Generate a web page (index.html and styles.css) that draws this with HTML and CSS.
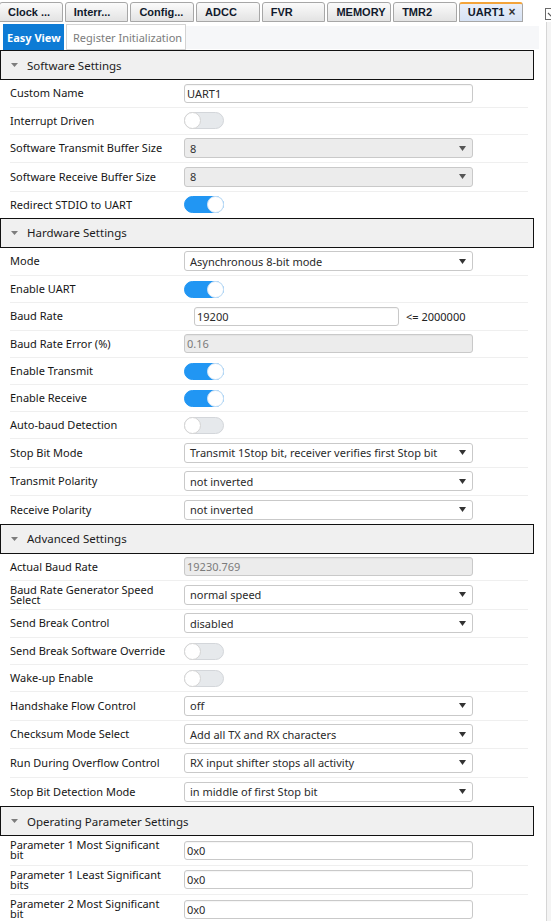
FILE: index.html
```html
<!DOCTYPE html>
<html>
<head>
<meta charset="utf-8">
<link rel="stylesheet" href="styles.css">
</head>
<body>
<div class="tabbar">
  <div class="tab">Clock ...</div>
  <div class="tab">Interr...</div>
  <div class="tab">Config...</div>
  <div class="tab">ADCC</div>
  <div class="tab">FVR</div>
  <div class="tab">MEMORY</div>
  <div class="tab">TMR2</div>
  <div class="tab active">UART1<span class="x">×</span></div>
  <div class="tabmenu"><svg width="12" height="12" viewBox="0 0 12 12"><rect x="0.5" y="0.5" width="11" height="11" fill="#fff" stroke="#6a6a6a"/><path d="M3 5 L6 8 L9 5" fill="none" stroke="#555" stroke-width="1.2"/></svg></div>
</div>
<div class="main">
  <div class="content">
    <div class="subtabs">
      <div class="st st-on">Easy View</div>
      <div class="st st-off">Register Initialization</div>
      <div class="st-fill"></div>
    </div>

    <div class="sh"><svg class="tri" width="7" height="4" viewBox="0 0 7 4"><path d="M0 0 H7 L3.5 4 Z" fill="#7d7d7d"/></svg>Software Settings</div>
    <div class="row r-in"><div class="lbl">Custom Name</div><div class="field">UART1</div></div>
    <div class="row r-tg"><div class="lbl">Interrupt Driven</div><div class="tg"><span class="knob"></span></div></div>
    <div class="row r-sel"><div class="lbl">Software Transmit Buffer Size</div><div class="sel dis"><span>8</span><svg class="arr" width="7" height="5" viewBox="0 0 7 5"><path d="M0 0 H7 L3.5 5 Z" fill="#555"/></svg></div></div>
    <div class="row r-sel"><div class="lbl">Software Receive Buffer Size</div><div class="sel dis"><span>8</span><svg class="arr" width="7" height="5" viewBox="0 0 7 5"><path d="M0 0 H7 L3.5 5 Z" fill="#555"/></svg></div></div>
    <div class="row r-tg last short"><div class="lbl">Redirect STDIO to UART</div><div class="tg on"><span class="knob"></span></div></div>

    <div class="sh"><svg class="tri" width="7" height="4" viewBox="0 0 7 4"><path d="M0 0 H7 L3.5 4 Z" fill="#7d7d7d"/></svg>Hardware Settings</div>
    <div class="row r-sel"><div class="lbl">Mode</div><div class="sel"><span>Asynchronous 8-bit mode</span><svg class="arr" width="7" height="5" viewBox="0 0 7 5"><path d="M0 0 H7 L3.5 5 Z" fill="#333"/></svg></div></div>
    <div class="row r-tg"><div class="lbl">Enable UART</div><div class="tg on"><span class="knob"></span></div></div>
    <div class="row r-in"><div class="lbl">Baud Rate</div><div class="field baud">19200</div><span class="limit">&lt;= 2000000</span></div>
    <div class="row r-in"><div class="lbl">Baud Rate Error (%)</div><div class="field dis">0.16</div></div>
    <div class="row r-tg"><div class="lbl">Enable Transmit</div><div class="tg on"><span class="knob"></span></div></div>
    <div class="row r-tg"><div class="lbl">Enable Receive</div><div class="tg on"><span class="knob"></span></div></div>
    <div class="row r-tg"><div class="lbl">Auto-baud Detection</div><div class="tg"><span class="knob"></span></div></div>
    <div class="row r-sel"><div class="lbl">Stop Bit Mode</div><div class="sel"><span>Transmit 1Stop bit, receiver verifies first Stop bit</span><svg class="arr" width="7" height="5" viewBox="0 0 7 5"><path d="M0 0 H7 L3.5 5 Z" fill="#333"/></svg></div></div>
    <div class="row r-sel"><div class="lbl">Transmit Polarity</div><div class="sel"><span>not inverted</span><svg class="arr" width="7" height="5" viewBox="0 0 7 5"><path d="M0 0 H7 L3.5 5 Z" fill="#333"/></svg></div></div>
    <div class="row r-sel last short"><div class="lbl">Receive Polarity</div><div class="sel"><span>not inverted</span><svg class="arr" width="7" height="5" viewBox="0 0 7 5"><path d="M0 0 H7 L3.5 5 Z" fill="#333"/></svg></div></div>

    <div class="sh"><svg class="tri" width="7" height="4" viewBox="0 0 7 4"><path d="M0 0 H7 L3.5 4 Z" fill="#7d7d7d"/></svg>Advanced Settings</div>
    <div class="row r-in"><div class="lbl">Actual Baud Rate</div><div class="field dis">19230.769</div></div>
    <div class="row r-sel"><div class="lbl">Baud Rate Generator Speed Select</div><div class="sel"><span>normal speed</span><svg class="arr" width="7" height="5" viewBox="0 0 7 5"><path d="M0 0 H7 L3.5 5 Z" fill="#333"/></svg></div></div>
    <div class="row r-sel"><div class="lbl">Send Break Control</div><div class="sel"><span>disabled</span><svg class="arr" width="7" height="5" viewBox="0 0 7 5"><path d="M0 0 H7 L3.5 5 Z" fill="#333"/></svg></div></div>
    <div class="row r-tg"><div class="lbl">Send Break Software Override</div><div class="tg"><span class="knob"></span></div></div>
    <div class="row r-tg"><div class="lbl">Wake-up Enable</div><div class="tg"><span class="knob"></span></div></div>
    <div class="row r-sel"><div class="lbl">Handshake Flow Control</div><div class="sel"><span>off</span><svg class="arr" width="7" height="5" viewBox="0 0 7 5"><path d="M0 0 H7 L3.5 5 Z" fill="#333"/></svg></div></div>
    <div class="row r-sel"><div class="lbl">Checksum Mode Select</div><div class="sel"><span>Add all TX and RX characters</span><svg class="arr" width="7" height="5" viewBox="0 0 7 5"><path d="M0 0 H7 L3.5 5 Z" fill="#333"/></svg></div></div>
    <div class="row r-sel"><div class="lbl">Run During Overflow Control</div><div class="sel"><span>RX input shifter stops all activity</span><svg class="arr" width="7" height="5" viewBox="0 0 7 5"><path d="M0 0 H7 L3.5 5 Z" fill="#333"/></svg></div></div>
    <div class="row r-sel last"><div class="lbl">Stop Bit Detection Mode</div><div class="sel"><span>in middle of first Stop bit</span><svg class="arr" width="7" height="5" viewBox="0 0 7 5"><path d="M0 0 H7 L3.5 5 Z" fill="#333"/></svg></div></div>

    <div class="sh"><svg class="tri" width="7" height="4" viewBox="0 0 7 4"><path d="M0 0 H7 L3.5 4 Z" fill="#7d7d7d"/></svg>Operating Parameter Settings</div>
    <div class="row r-p"><div class="lbl">Parameter 1 Most Significant bit</div><div class="field">0x0</div></div>
    <div class="row r-p"><div class="lbl">Parameter 1 Least Significant bits</div><div class="field">0x0</div></div>
    <div class="row r-p"><div class="lbl">Parameter 2 Most Significant bit</div><div class="field">0x0</div></div>
  </div>
  <div class="vscroll"></div>
</div>
</body>
</html>
```

FILE: styles.css
```css
* { box-sizing: border-box; }
html, body { margin: 0; padding: 0; background: #fff; }
body {
  width: 551px;
  height: 921px;
  overflow: hidden;
  font-family: "Noto Sans", "Open Sans", sans-serif;
  font-size: 11px;
  color: #161616;
}

/* top tab bar */
.tabbar {
  display: flex;
  gap: 2px;
  height: 22px;
  margin-left: -1px;
  overflow: hidden;
  white-space: nowrap;
}
.tab {
  flex: none;
  width: 63.7px;
  height: 20px;
  margin-top: 2px;
  padding-left: 8px;
  border: 1px solid #a7a7a7;
  border-radius: 3px 3px 0 0;
  background: linear-gradient(#fbfbfb, #e3e3e3);
  font-family: "Liberation Sans", Arial, sans-serif;
  font-weight: bold;
  font-size: 11px;
  line-height: 18px;
  color: #111a2c;
}
.tab.active {
  border-top: 2px solid #f3a43b;
  background: linear-gradient(#e9effa, #d6e2f4);
  line-height: 17px;
  display: flex;
  justify-content: space-between;
  padding-right: 6px;
}
.tab .x { font-size: 12px; color: #333; }
.tabmenu { flex: none; margin-left: 20px; margin-top: 8px; }

/* main area */
.main { display: flex; }
.content { width: 546px; flex: none; }
.vscroll {
  width: 5px;
  height: 899px;
  border-left: 1px solid #d6d6d6;
  background: #f4f4f4;
}

/* sub tabs */
.subtabs {
  display: flex;
  height: 26px;
  margin-top: 2px;
  padding-left: 3px;
}
.st { display: flex; align-items: center; flex: none; white-space: nowrap; overflow: hidden; }
.st-on {
  width: 61px;
  background: #0d7bd5;
  color: #fff;
  font-weight: bold;
  font-size: 11px;
  padding-left: 4px;
}
.st-off {
  width: 120px;
  margin-left: 2px;
  border: 1px solid #d3d3d3;
  color: #7c7c7c;
  font-size: 11px;
  padding-left: 6px;
}
.st-fill {
  width: 353px;
  margin: 2px 0 1px;
  background: #f6f7f9;
}

/* section header */
.sh {
  display: flex;
  align-items: center;
  width: 534px;
  height: 30px;
  border: 1px solid #111;
  background: #f0f0f0;
  padding-left: 10px;
  font-size: 11.5px;
  color: #1c1c1c;
}
.sh .tri { margin-right: 9px; }

/* rows */
.row {
  display: flex;
  align-items: center;
  width: 518px;
  margin-left: 10px;
  border-bottom: 1px solid #efefef;
}
.row.last { border-bottom: none; }
.r-in { height: 27.5px; }
.r-tg { height: 27px; }
.r-sel { height: 28.5px; }
.r-p { height: 29.5px; }
.r-tg.short { height: 26px; }
.r-sel.short { height: 27.5px; }
.lbl {
  flex: none;
  width: 174px;
  padding-right: 6px;
  line-height: 10px;
  color: #161616;
}
.r-p .lbl { padding-right: 10px; }

.field {
  flex: none;
  width: 289px;
  height: 19px;
  display: flex;
  align-items: center;
  padding-left: 2px;
  border: 1px solid #c9c9c9;
  border-radius: 3px;
  background: #fff;
  box-shadow: inset 0 1px 1px rgba(0,0,0,0.04);
  color: #2a2a2a;
}
.field.dis { background: #ececec; color: #7b7b7b; }
.field.baud { width: 205px; margin-left: 10px; }
.limit { margin-left: 7px; color: #222; }

.sel {
  flex: none;
  width: 289px;
  height: 20px;
  display: flex;
  align-items: center;
  justify-content: space-between;
  padding-left: 5px;
  padding-right: 6px;
  border: 1px solid #c9c9c9;
  border-radius: 3px;
  background: #fff;
  color: #2a2a2a;
  white-space: nowrap;
}
.sel.dis { background: #ececec; color: #333; }

/* toggles */
.tg {
  flex: none;
  width: 40px;
  height: 17px;
  display: flex;
  align-items: center;
  border: 1px solid #d3d6da;
  border-radius: 9px;
  background: #e6e9ec;
}
.tg .knob {
  width: 17px;
  height: 17px;
  margin-left: -1px;
  border-radius: 50%;
  background: #fff;
  border: 1px solid #d4d4d4;
}
.tg.on {
  background: #2196f3;
  border-color: #2196f3;
  justify-content: flex-end;
}
.tg.on .knob { margin-left: 0; margin-right: -1px; border-color: #cfe3f5; }
```
